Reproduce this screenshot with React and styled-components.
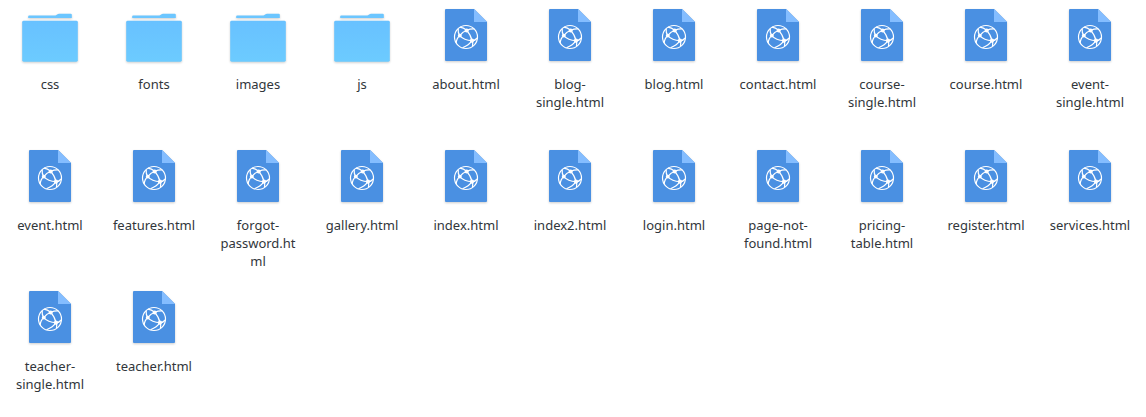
import React from "react";
import styled, { createGlobalStyle } from "styled-components";

const GlobalStyle = createGlobalStyle`
  body {
    margin: 0;
    background: #fff;
    overflow: hidden;
  }
`;

const FileGrid = styled.main`
  display: grid;
  grid-template-columns: repeat(11, 84px);
  grid-auto-rows: 141px;
  column-gap: 20px;
  padding: 3px 8px 0;
  height: 417px;
  box-sizing: border-box;
`;

const FileItem = styled.div`
  display: flex;
  flex-direction: column;
  align-items: center;
  gap: 8px;
`;

const Icon = styled.svg`
  display: block;
  flex: none;
  width: 64px;
  height: 64px;
  overflow: visible;
  filter: drop-shadow(0 1px 1px rgba(0, 0, 0, 0.2));
`;

const Label = styled.span`
  width: 84px;
  color: #31363b;
  font: 13px/18px "Noto Sans", sans-serif;
  text-align: center;
  overflow-wrap: break-word;
`;

function FolderIcon() {
  return (
    <Icon viewBox="0 0 64 64">
      <defs>
        <linearGradient id="folder-front" x1="0" y1="0" x2="0" y2="1">
          <stop offset="0" stopColor="#68c1ff" />
          <stop offset="1" stopColor="#6ccbff" />
        </linearGradient>
      </defs>
      <path
        d="M10.2 15V13.3q0-.9.9-.9H37.5q1 0 1.6-.8l.5-.4q.5-.5 1.3-.5H52.8q1 0 1 1V15z"
        fill="#6cc6ff"
      />
      <rect x="4.2" y="17.8" width="55.6" height="40.9" rx="1.4" fill="url(#folder-front)" />
    </Icon>
  );
}

function HtmlIcon() {
  return (
    <Icon viewBox="0 0 64 64">
      <path d="M12 6H40L53 19V57a1 1 0 0 1-1 1H12a1 1 0 0 1-1-1V7a1 1 0 0 1 1-1z" fill="#4a90e2" />
      <path d="M40 6L53 19H40z" fill="#84bdff" />
      <g fill="none" stroke="#fff" strokeWidth="1.2">
        <circle cx="32" cy="34" r="11.5" />
        <path d="M26 24.2Q29.5 24.6 32.7 27.3Q37 25.6 40.4 26" />
        <path d="M32.7 27.3Q28.8 28.7 25.7 32.7Q22.5 35.2 22.2 40" />
        <path d="M25.7 32.7Q23.8 30 24.2 26" />
        <path d="M32.7 27.3Q36.7 31.5 38 37.7Q39.4 40 38.5 43.5" />
        <path d="M25.7 32.7Q30 37.5 38 37.7Q41 37.8 43.3 35" />
        <path d="M38 37.7Q35 42.2 28.5 44.8" />
      </g>
      <g fill="#fff">
        <circle cx="32.7" cy="27.4" r="2" />
        <circle cx="25.8" cy="32.6" r="1.9" />
        <circle cx="38" cy="37.7" r="2.1" />
      </g>
    </Icon>
  );
}

const folders = ["css", "fonts", "images", "js"];

const pages = [
  "about.html", "blog-single.html", "blog.html", "contact.html",
  "course-single.html", "course.html", "event-single.html", "event.html",
  "features.html", "forgot-password.html", "gallery.html", "index.html",
  "index2.html", "login.html", "page-not-found.html", "pricing-table.html",
  "register.html", "services.html", "teacher-single.html", "teacher.html",
];

export default function App() {
  return (
    <>
      <GlobalStyle />
      <FileGrid>
        {folders.map((name) => (
          <FileItem key={name}>
            <FolderIcon />
            <Label>{name}</Label>
          </FileItem>
        ))}
        {pages.map((name) => (
          <FileItem key={name}>
            <HtmlIcon />
            <Label>{name}</Label>
          </FileItem>
        ))}
      </FileGrid>
    </>
  );
}
